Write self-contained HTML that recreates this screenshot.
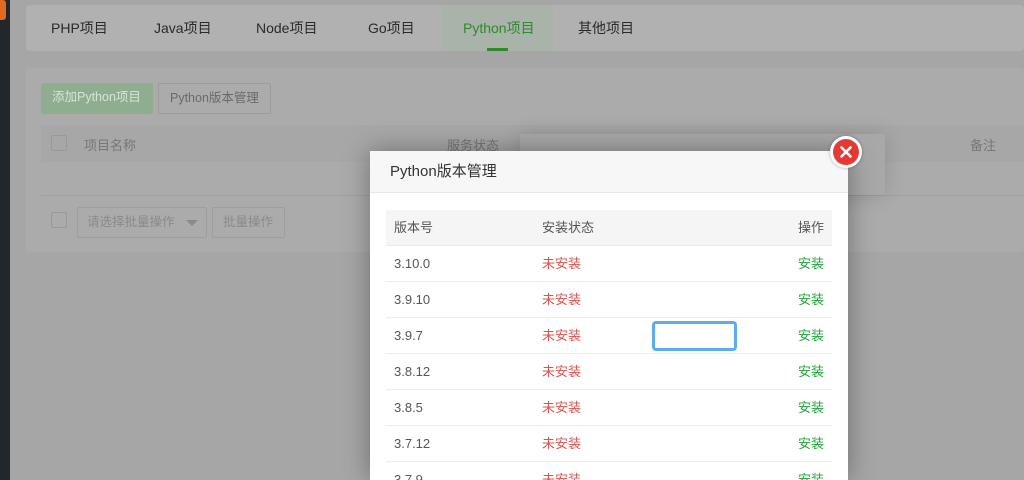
<!DOCTYPE html>
<html><head><meta charset="utf-8"><style>
*{margin:0;padding:0;box-sizing:border-box}
html,body{width:1024px;height:480px;overflow:hidden}
body{background:#a6a6a6;font-family:"Liberation Sans","Noto Sans CJK SC",sans-serif;position:relative;white-space:nowrap}
.abs{position:absolute}
.side{left:0;top:0;width:10px;height:480px;background:#22272c}
.tabs{left:26px;top:5px;width:998px;height:46px;background:#b1b1b1;border-radius:4px}
.tab{position:absolute;top:0;height:46px;line-height:46px;font-size:14px;color:#2a2a2a}
.panel{left:26px;top:68px;width:998px;height:184px;background:#ababab;border-radius:4px;overflow:hidden}
.btn{position:absolute;height:31px;line-height:29px;font-size:12.5px;border-radius:2px;padding:0 11px}
.modal{left:370px;top:151px;width:478px;height:329px;background:#fff;box-shadow:0 0 25px rgba(0,0,0,.35);overflow:hidden}
.mh{height:42px;background:#f7f7f7;border-bottom:1px solid #e8e8e8;font-size:15px;line-height:42px;padding-left:20px;color:#333}
table{position:absolute;left:16px;top:59px;width:446px;border-collapse:collapse;font-size:13px;color:#555}
td{height:35px;line-height:35px;border-bottom:1px solid #ececec;padding:0 8px;vertical-align:middle}
tr.h td{background:#f5f5f5}
.r{color:#d9534f}.g{color:#20a53a;text-align:right;padding-right:8px}
</style></head><body>
<div class="abs side"><div style="width:6px;height:20px;background:#e06a20;border-radius:0 3px 3px 0"></div></div>
<div class="abs tabs">
<span class="tab" style="left:25px">PHP项目</span>
<span class="tab" style="left:128px">Java项目</span>
<span class="tab" style="left:230px">Node项目</span>
<span class="tab" style="left:342px">Go项目</span>
<div class="abs" style="left:416px;top:0;width:111px;height:46px;background:#a9b3a9"></div>
<span class="tab" style="left:437px;color:#2e8a2e">Python项目</span>
<div class="abs" style="left:461px;top:43px;width:21px;height:3px;background:#2e8a2e"></div>
<span class="tab" style="left:552px">其他项目</span>
</div>
<div class="abs panel">
<div class="btn" style="left:15px;top:15px;background:#8fae8f;color:#d6e4d6;width:112px">添加Python项目</div>
<div class="btn" style="left:132px;top:15px;border:1px solid #9c9c9c;color:#6a6a6a">Python版本管理</div>
<div class="abs" style="left:15px;top:57px;width:983px;height:37px;background:#a7a7a7"></div>
<div class="abs" style="left:15px;top:94px;width:983px;height:34px;border-bottom:1px solid #9f9f9f"></div>
<div class="abs" style="left:25px;top:67px;width:16px;height:16px;border:1px solid #999;border-radius:2px"></div>
<span class="abs" style="left:58px;top:67px;font-size:13px;color:#777">项目名称</span>
<span class="abs" style="left:421px;top:67px;font-size:13px;color:#777">服务状态</span>
<span class="abs" style="left:944px;top:67px;font-size:13px;color:#777">备注</span>
<div class="abs" style="left:25px;top:144px;width:16px;height:16px;border:1px solid #999;border-radius:2px"></div>
<div class="btn" style="left:51px;top:139px;width:130px;border:1px solid #9e9e9e;color:#8a8a8a;padding:0 9px">请选择批量操作<span style="position:absolute;right:8px;top:12px;border:6px solid transparent;border-top:6px solid #8a8a8a;border-bottom:0"></span></div>
<div class="btn" style="left:186px;top:139px;border:1px solid #9e9e9e;color:#8a8a8a;width:73px;padding:0 10px">批量操作</div>
</div>
<div class="abs" style="left:520px;top:134px;width:365px;height:61px;background:#a8a8a8;box-shadow:0 0 20px rgba(0,0,0,.15)"></div>
<div class="abs modal">
<div class="mh">Python版本管理</div>
<table>
<tr class="h"><td style="width:148px">版本号</td><td>安装状态</td><td class="g" style="color:#555">操作</td></tr>
<tr><td>3.10.0</td><td class="r">未安装</td><td class="g">安装</td></tr>
<tr><td>3.9.10</td><td class="r">未安装</td><td class="g">安装</td></tr>
<tr><td>3.9.7</td><td class="r">未安装</td><td class="g">安装</td></tr>
<tr><td>3.8.12</td><td class="r">未安装</td><td class="g">安装</td></tr>
<tr><td>3.8.5</td><td class="r">未安装</td><td class="g">安装</td></tr>
<tr><td>3.7.12</td><td class="r">未安装</td><td class="g">安装</td></tr>
<tr><td>3.7.9</td><td class="r">未安装</td><td class="g">安装</td></tr>
</table>
<div class="abs" style="left:282px;top:170px;width:85px;height:30px;border:3px solid #5aaef0;border-radius:4px"></div>
</div>
<div class="abs" style="left:830px;top:136px;width:32px;height:32px;border-radius:50%;background:#fff;box-shadow:0 0 3px rgba(0,0,0,.3)">
<svg width="32" height="32"><circle cx="16" cy="16" r="13" fill="#e53935"/><path d="M11.5 11.5L20.5 20.5M20.5 11.5L11.5 20.5" stroke="#fff" stroke-width="2.6" stroke-linecap="round"/></svg>
</div>
</body></html>
